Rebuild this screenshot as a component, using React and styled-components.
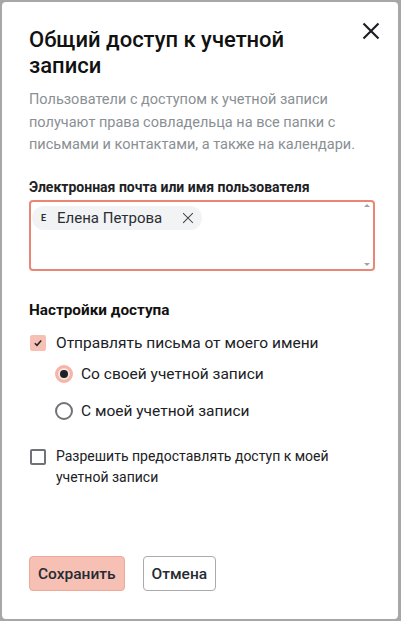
import React from "react";
import styled, { createGlobalStyle } from "styled-components";

const Global = createGlobalStyle`
  html, body { margin: 0; padding: 0; background: #a7a7a7; }
  body { font-family: Roboto, "Noto Sans", Arial, sans-serif; }
  * { box-sizing: border-box; }
`;

const Dialog = styled.div`
  margin: 2px 3px 2px 2px;
  width: 396px;
  height: 617px;
  background: #fff;
  border-radius: 4px;
  padding: 25px 18px 0 27px;
  display: flex;
  flex-direction: column;
  color: #202124;
`;

const Header = styled.div`
  display: flex;
  justify-content: space-between;
  align-items: flex-start;
`;

const Title = styled.h1`
  margin: 0;
  font-size: 22px;
  line-height: 26px;
  font-weight: 500;
  color: #111;
  max-width: 300px;
`;

const CloseButton = styled.button`
  border: none;
  background: none;
  padding: 0;
  width: 18px;
  height: 18px;
  margin-top: -5px;
  cursor: pointer;
  display: flex;
`;

const Description = styled.p`
  margin: 10px 0 0;
  font-size: 14.5px;
  line-height: 22.5px;
  color: #8a8f94;
`;

const FieldLabel = styled.div`
  margin-top: 20px;
  font-size: 14px;
  line-height: 20px;
  font-weight: 700;
  color: #202124;
`;

const InputBox = styled.div`
  position: relative;
  margin-top: 3px;
  width: 346px;
  height: 71px;
  border: 2px solid #ec8674;
  border-radius: 4px;
  padding: 4px 1px;
`;

const Chip = styled.span`
  display: inline-flex;
  align-items: center;
  height: 24px;
  padding: 0 8px 0 9px;
  border-radius: 12px;
  background: #f1f3f4;
  font-size: 15px;
  color: #2a2e33;
`;

const ChipAvatar = styled.span`
  font-size: 9px;
  font-weight: 700;
  width: 6px;
  margin-right: 10px;
  color: #2a2e33;
`;

const ChipRemove = styled.span`
  display: flex;
  margin-left: 20px;
`;

const ScrollArrow = styled.span`
  position: absolute;
  right: 3px;
  ${(p) => (p.$down ? "bottom: 3px;" : "top: 2px;")}
  width: 0;
  height: 0;
  border-left: 3px solid transparent;
  border-right: 3px solid transparent;
  ${(p) =>
    p.$down ? "border-top: 3px solid #a3a3a3;" : "border-bottom: 3px solid #a3a3a3;"}
`;

const SectionTitle = styled.div`
  margin-top: 29px;
  font-size: 15.3px;
  line-height: 20px;
  font-weight: 700;
  color: #111;
`;

const OptionRow = styled.label`
  display: flex;
  align-items: ${(p) => (p.$top ? "flex-start" : "center")};
  gap: ${(p) => p.$gap || 10}px;
  margin-top: ${(p) => p.$mt || 0}px;
  padding-left: ${(p) => p.$indent || 0}px;
  font-size: ${(p) => p.$size || 14}px;
  line-height: 21px;
  color: #202124;
`;

const OptionText = styled.span`
  max-width: 290px;
`;

const Checkbox = styled.span`
  flex: none;
  width: 16px;
  height: 16px;
  border-radius: 2px;
  margin-left: 1px;
  margin-top: ${(p) => (p.$top ? "3px" : "0")};
  display: flex;
  align-items: center;
  justify-content: center;
  ${(p) =>
    p.$checked
      ? "background: #f6c0b5;"
      : "background: #fff; border: 2px solid #6f7276;"}
`;

const Radio = styled.span`
  flex: none;
  width: 18px;
  height: 18px;
  border-radius: 50%;
  display: flex;
  align-items: center;
  justify-content: center;
  ${(p) =>
    p.$checked
      ? "background: #fbe0da; border: 3px solid #f4b4a7;"
      : "background: #fff; border: 2px solid #6f7276;"}
`;

const RadioDot = styled.span`
  width: 8px;
  height: 8px;
  border-radius: 50%;
  background: #1d222a;
`;

const Footer = styled.div`
  margin-top: auto;
  margin-bottom: 28px;
  display: flex;
  gap: 18px;
`;

const Button = styled.button`
  height: 35px;
  padding: 0 8px;
  border-radius: 4px;
  font-family: Roboto, "Noto Sans", Arial, sans-serif;
  font-size: 15.5px;
  font-weight: 500;
  color: #262b31;
  cursor: pointer;
  ${(p) =>
    p.$primary
      ? "background: #f6c0b5; border: 1px solid #efa898;"
      : "background: #fff; border: 1px solid #a9abae;"}
`;

const XIcon = ({ size, stroke, color }) => (
  <svg width={size} height={size} viewBox="0 0 16 16" fill="none">
    <path
      d="M2 2L14 14M14 2L2 14"
      stroke={color}
      strokeWidth={stroke}
      strokeLinecap="square"
    />
  </svg>
);

export default function App() {
  return (
    <>
      <Global />
      <Dialog>
        <Header>
          <Title>Общий доступ к учетной записи</Title>
          <CloseButton aria-label="Закрыть">
            <XIcon size={18} stroke={1.9} color="#1b1f24" />
          </CloseButton>
        </Header>
        <Description>
          Пользователи с доступом к учетной записи получают права совладельца на
          все папки с письмами и контактами, а также на календари.
        </Description>
        <FieldLabel>Электронная почта или имя пользователя</FieldLabel>
        <InputBox>
          <Chip>
            <ChipAvatar>Е</ChipAvatar>
            Елена Петрова
            <ChipRemove>
              <XIcon size={12} stroke={1.4} color="#3a3f45" />
            </ChipRemove>
          </Chip>
          <ScrollArrow />
          <ScrollArrow $down />
        </InputBox>
        <SectionTitle>Настройки доступа</SectionTitle>
        <OptionRow $mt={13} $size={15.5}>
          <Checkbox $checked>
            <svg width="10" height="10" viewBox="0 0 10 10" fill="none">
              <path
                d="M1.8 5.2L4 7.3L8.2 2.6"
                stroke="#1d222a"
                strokeWidth="1.5"
              />
            </svg>
          </Checkbox>
          <span>Отправлять письма от моего имени</span>
        </OptionRow>
        <OptionRow $mt={10} $indent={26} $gap={8} $size={15.5}>
          <Radio $checked>
            <RadioDot />
          </Radio>
          <span>Со своей учетной записи</span>
        </OptionRow>
        <OptionRow $mt={16} $indent={26} $gap={8} $size={15.5}>
          <Radio />
          <span>С моей учетной записи</span>
        </OptionRow>
        <OptionRow $mt={24} $top $size={14}>
          <Checkbox $top />
          <OptionText>Разрешить предоставлять доступ к моей учетной записи</OptionText>
        </OptionRow>
        <Footer>
          <Button $primary>Сохранить</Button>
          <Button>Отмена</Button>
        </Footer>
      </Dialog>
    </>
  );
}
